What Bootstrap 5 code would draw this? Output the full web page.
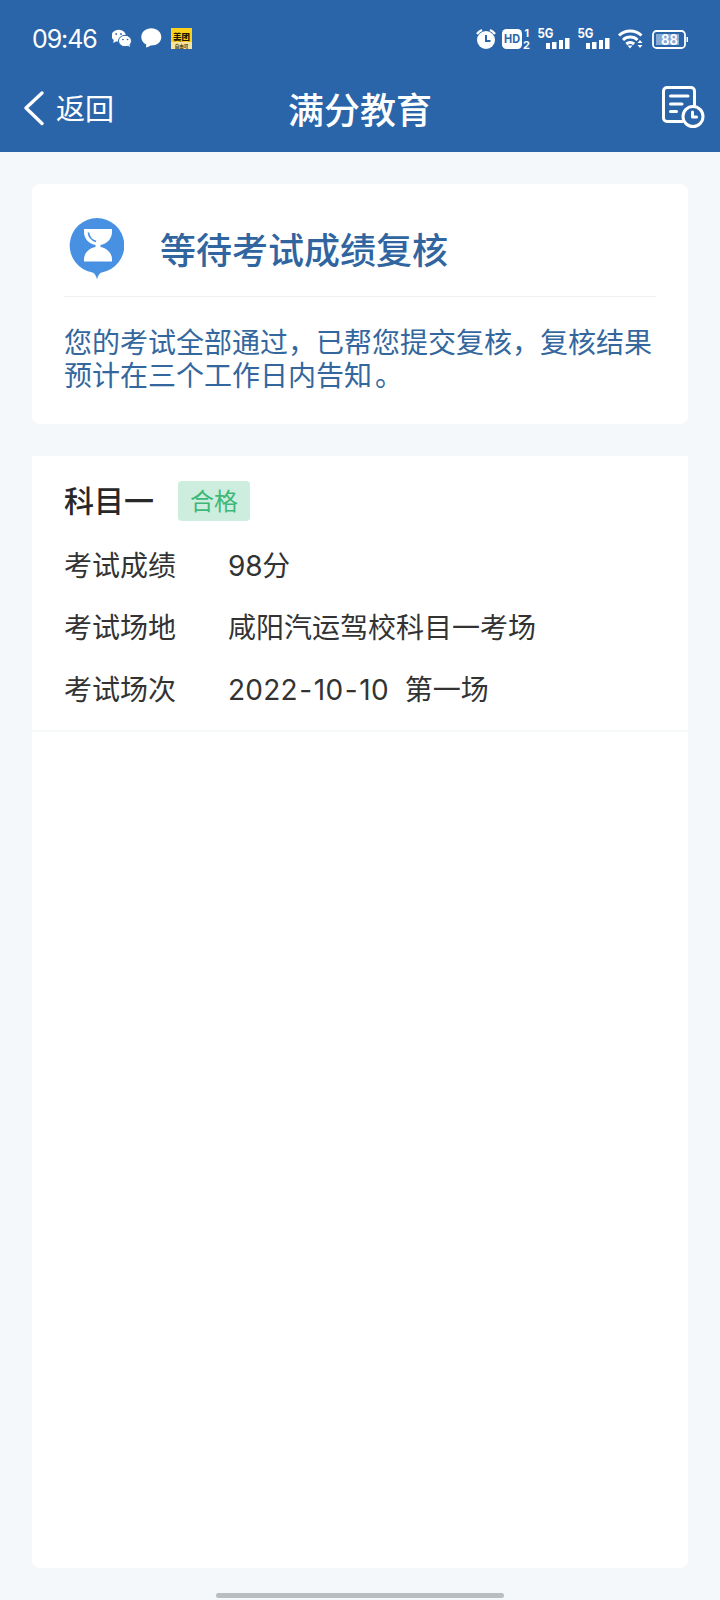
<!DOCTYPE html>
<html lang="zh-CN">
<head>
<meta charset="utf-8">
<meta name="viewport" content="width=device-width, initial-scale=1">
<title>满分教育</title>
<link href="https://cdn.jsdelivr.net/npm/bootstrap@5.3.0/dist/css/bootstrap.min.css" rel="stylesheet">
<style>
body{background:#f4f8fa;font-family:Inter,"Noto Sans CJK SC",sans-serif;font-size:28px;line-height:33px;color:#333}
svg{display:block;flex:none}
.app-head{height:152px;background:#2b65a9;color:#fff}
.status-bar{height:78px;padding:0 32px}
.clock{font-size:25px;letter-spacing:-1.1px;width:80px}
.title-bar{height:64px;padding:0 14px 0 22px}
.side{width:150px}
.side-back{width:142px;padding-bottom:2px}
.back-text{font-size:29px}
.page-title{font-size:36px;font-weight:500;line-height:44px;padding-top:2px}
.record-icon{margin-bottom:8px}
.content{padding:32px 32px 0;gap:32px}
.panel{background:#fff;border-radius:8px}
.result-panel{height:240px;padding:0 32px}
.result-head{height:113px;border-bottom:1px solid #f0f2f3;padding-top:15px}
.result-title{font-size:36px;font-weight:500;line-height:44px;color:#30659f;margin-left:36px;padding-top:6px}
.result-note{color:#34679e;padding-top:30px}
.stop-mark{padding-left:3px}
.detail-panel{height:1112px;border-radius:0 0 8px 8px}
.subject{height:276px;border-bottom:2px solid #f5f8f9;padding:25px 32px 0}
.subject-name{font-size:30px;font-weight:500;color:#282828;padding-top:1px}
.pass{width:72px;height:40px;border-radius:4px;background:#cdeede;color:#3db878;font-size:24px;margin-left:24px}
.fields{padding-top:14px}
.field-row{height:62px}
.field-label{width:164px}
.num{letter-spacing:-.2px}
.exam-date{letter-spacing:.2px}
.dash{padding:0 1.500px}
.home-pill{width:288px;height:5px;border-radius:3px;background:#b9bebf;margin-top:25px}
</style>
</head>
<body>
<div class="d-flex flex-column vh-100 overflow-hidden">
<header class="app-head">
  <div class="status-bar d-flex align-items-center">
    <span class="clock">09:46</span>
    <svg width="80" height="24" viewBox="112 27 80 24" fill="#fff">
      <ellipse cx="118.700" cy="35.800" rx="7.200" ry="6"/><path d="M114 39l-.8 4 4-2.300z"/>
      <ellipse cx="125" cy="41" rx="6.500" ry="5.700" stroke="#2b65a9" stroke-width="1"/><path d="M127 45l3 2-.6-3.500z"/>
      <g fill="#2b65a9"><circle cx="116.200" cy="34" r=".9"/><circle cx="121" cy="34" r=".9"/><circle cx="123" cy="39.500" r=".8"/><circle cx="127.500" cy="39.500" r=".8"/></g>
      <path d="M151.300 28.300c-5.600 0-10 3.900-10 8.700 0 3.500 2 6.200 4.900 7.600l-.2 3c1.800-.5 3.300-1.300 4.500-2.100 6 .3 10.800-3.300 10.800-8.500 0-4.800-4.400-8.700-10-8.700z"/>
      <path fill="#fbd11b" d="M171 28h21v21h-21z"/><path fill="#f7e2a0" d="M171 42h21v7h-21z"/>
      <text x="181.500" y="40" text-anchor="middle" font-size="8.500" font-weight="900" font-family="Noto Sans CJK SC" fill="#201800">美团</text>
      <text x="181.500" y="47.700" text-anchor="middle" font-size="4.500" font-weight="700" font-family="Noto Sans CJK SC" fill="#3a2c00">自由可</text>
    </svg>
    <svg class="ms-auto" width="213" height="40" viewBox="475 19 213 40" fill="#fff" font-family="Inter, sans-serif" font-weight="700">
      <circle cx="486" cy="40" r="9"/><path d="M477 34a12 12 0 0 1 5-4M490 30a12 12 0 0 1 5 4" fill="none" stroke="#fff" stroke-width="2.200"/><path d="M486 35v6h4.500" stroke="#2b65a9" stroke-width="2" fill="none"/>
      <rect x="502" y="29" width="20" height="20" rx="4.500"/><text x="504" y="43.300" font-size="12" textLength="16" lengthAdjust="spacingAndGlyphs" fill="#2b65a9">HD</text>
      <text x="524.500" y="37" font-size="10.500">1</text><text x="523" y="48.500" font-size="11">2</text>
      <text x="537.500" y="38" font-size="13" textLength="16" lengthAdjust="spacingAndGlyphs">5G</text><path d="M546 43h4v6h-4zM552 42h4.500v7H552zM559 40h4v9h-4zM565 38h4.500v11H565z"/>
      <text x="577.500" y="38" font-size="13" textLength="16" lengthAdjust="spacingAndGlyphs">5G</text><path d="M586 43h4v6h-4zM592 42h4.500v7H592zM599 40h4v9h-4zM605 38h4.500v11H605z"/>
      <g fill="none" stroke="#fff" stroke-width="3"><path d="M619 35.500a16.500 16.500 0 0 1 22.500 0M623 40a10.500 10.500 0 0 1 14.500 0M626.300 44a6 6 0 0 1 7.800 0"/></g><path d="M627.500 45.500h5l-2.500 3zM637.500 43l2.500-3 2.500 3zM637.500 45h5l-2.500 3z"/>
      <rect x="653" y="31" width="32" height="17" rx="3.500" fill="none" stroke="#fff" stroke-width="1.800"/><path fill="#87a9d5" d="M656 34h23v11h-23z"/><path d="M686.500 37h1.500v5h-1.500z"/>
      <text x="661" y="44.500" font-size="14" font-weight="600" textLength="17" lengthAdjust="spacingAndGlyphs">88</text>
    </svg>
  </div>
  <nav class="title-bar d-flex align-items-center justify-content-between">
    <div class="side-back d-flex align-items-center">
      <svg width="34" height="36" viewBox="22 91 34 36" fill="none" stroke="#fff" stroke-width="3.300" stroke-linecap="round" stroke-linejoin="round"><path d="M42 93L26 108l16 15.500"/></svg>
      <span class="back-text">返回</span>
    </div>
    <h1 class="page-title m-0">满分教育</h1>
    <div class="side d-flex justify-content-end">
      <svg class="record-icon" width="46" height="46" viewBox="660 84 46 46" fill="none" stroke="#fff" stroke-width="3" stroke-linecap="round" stroke-linejoin="round"><path d="M682 122.500h-15a3.500 3.500 0 0 1-3.500-3.500V92a3.500 3.500 0 0 1 3.500-3.500h24a3.500 3.500 0 0 1 3.500 3.500v14M670.500 97H688M670.500 105H682M670.500 112.500h6"/><circle cx="693" cy="117.500" r="10"/><path d="M692.500 113v5h4"/></svg>
    </div>
  </nav>
</header>
<main class="content d-flex flex-column">
  <section class="panel result-panel">
    <div class="result-head d-flex align-items-center">
      <svg width="60" height="64" viewBox="64 216 60 64"><path fill="#4891e2" d="M97 218a27.500 27.500 0 0 1 4.500 54.600Q98.500 273.500 97 279.500 95.500 273.500 92.500 272.600A27.500 27.500 0 0 1 97 218z"/><path fill="#fff" d="M84 229h28v3c0 6-4 11.500-11.500 13v2c7.500 1.500 11.500 7 11.500 12v2.500H84V259c0-5 4-10.500 11.500-12v-2C88 243.500 84 238 84 232z"/><path d="M88.500 232.500q.5 6.500 7.500 9" stroke="#4891e2" stroke-width="1.700" fill="none"/></svg>
      <h2 class="result-title mb-0">等待考试成绩复核</h2>
    </div>
    <p class="result-note m-0">您的考试全部通过，已帮您提交复核，复核结果<br>预计在三个工作日内告知<span class="stop-mark">。</span></p>
  </section>
  <section class="panel detail-panel">
    <div class="subject">
      <div class="d-flex align-items-center">
        <span class="subject-name">科目一</span>
        <span class="pass d-flex align-items-center justify-content-center">合格</span>
      </div>
      <div class="fields">
        <div class="field-row d-flex align-items-center"><span class="field-label">考试成绩</span><span><span class="num">98</span>分</span></div>
        <div class="field-row d-flex align-items-center"><span class="field-label">考试场地</span><span>咸阳汽运驾校科目一考场</span></div>
        <div class="field-row d-flex align-items-center"><span class="field-label">考试场次</span><span class="exam-date">2022<span class="dash">-</span>10<span class="dash">-</span>10</span><span class="ms-3">第一场</span></div>
      </div>
    </div>
  </section>
</main>
<div class="home-pill mx-auto"></div>
</div>
<script src="https://cdn.jsdelivr.net/npm/bootstrap@5.3.0/dist/js/bootstrap.bundle.min.js"></script>
</body>
</html>
